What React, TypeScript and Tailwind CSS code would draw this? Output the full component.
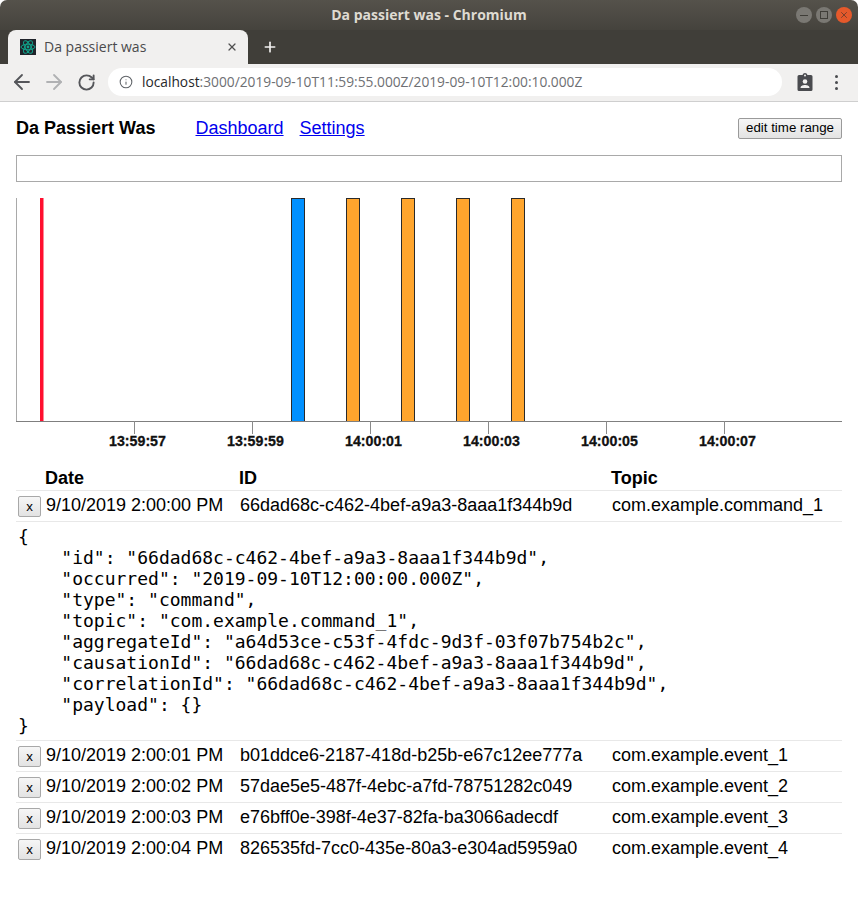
import { ArrowLeft, ArrowRight, Info, Plus, RotateCw, X } from 'lucide-react';

const events = [
  { date: '9/10/2019 2:00:00 PM', id: '66dad68c-c462-4bef-a9a3-8aaa1f344b9d', topic: 'com.example.command_1', open: true },
  { date: '9/10/2019 2:00:01 PM', id: 'b01ddce6-2187-418d-b25b-e67c12ee777a', topic: 'com.example.event_1' },
  { date: '9/10/2019 2:00:02 PM', id: '57dae5e5-487f-4ebc-a7fd-78751282c049', topic: 'com.example.event_2' },
  { date: '9/10/2019 2:00:03 PM', id: 'e76bff0e-398f-4e37-82fa-ba3066adecdf', topic: 'com.example.event_3' },
  { date: '9/10/2019 2:00:04 PM', id: '826535fd-7cc0-435e-80a3-e304ad5959a0', topic: 'com.example.event_4' },
];

const json = `{
    "id": "66dad68c-c462-4bef-a9a3-8aaa1f344b9d",
    "occurred": "2019-09-10T12:00:00.000Z",
    "type": "command",
    "topic": "com.example.command_1",
    "aggregateId": "a64d53ce-c53f-4fdc-9d3f-03f07b754b2c",
    "causationId": "66dad68c-c462-4bef-a9a3-8aaa1f344b9d",
    "correlationId": "66dad68c-c462-4bef-a9a3-8aaa1f344b9d",
    "payload": {}
}`;

const ticks = [
  { x: 118, label: '13:59:57' },
  { x: 236, label: '13:59:59' },
  { x: 354, label: '14:00:01' },
  { x: 472, label: '14:00:03' },
  { x: 590, label: '14:00:05' },
  { x: 708, label: '14:00:07' },
];

function Favicon() {
  return (
    <svg width="16" height="16" viewBox="0 0 16 16" className="shrink-0">
      <rect width="16" height="16" fill="#20232a" />
      <g fill="none" stroke="#10a58c" strokeWidth="1">
        <ellipse cx="8" cy="8" rx="7" ry="2.8" />
        <ellipse cx="8" cy="8" rx="7" ry="2.8" transform="rotate(60 8 8)" />
        <ellipse cx="8" cy="8" rx="7" ry="2.8" transform="rotate(120 8 8)" />
      </g>
      <circle cx="8" cy="8" r="1.4" fill="#10a58c" />
    </svg>
  );
}

function BrowserChrome() {
  return (
    <div className="font-['Noto_Sans',sans-serif]">
      <div className="relative h-[30px] rounded-t-[7px] bg-gradient-to-b from-[#55524b] to-[#45433d]">
        <div className="pt-[5px] text-center text-[14px] leading-[20px] font-bold text-[#dfdbd2] font-['Open_Sans',sans-serif]">
          Da passiert was - Chromium
        </div>
        <div className="absolute top-[7px] right-[6px] flex gap-[4px]">
          <div className="flex h-4 w-4 items-center justify-center rounded-full bg-[#7a7873]">
            <div className="h-px w-2 bg-[#3f3d38]" />
          </div>
          <div className="flex h-4 w-4 items-center justify-center rounded-full bg-[#7a7873]">
            <div className="h-2 w-2 border border-[#3f3d38]" />
          </div>
          <div className="flex h-4 w-4 items-center justify-center rounded-full bg-[#e5592b]">
            <X size={10} strokeWidth={1.5} className="text-[#40302a]" />
          </div>
        </div>
      </div>
      <div className="flex h-[34px] items-end bg-[#403e39] pl-2">
        <div className="flex h-[34px] w-[240px] items-center rounded-t-[8px] bg-[#f1f0ef] pr-[10px] pl-3">
          <Favicon />
          <span className="mb-[2px] ml-2 flex-1 text-[14px] text-[#4a4a4c] font-['Open_Sans',sans-serif]">Da passiert was</span>
          <X size={12} strokeWidth={2.5} className="text-[#505050]" />
        </div>
        <Plus size={16} strokeWidth={2.5} className="mb-[9px] ml-[14px] text-[#f1f0ef]" />
      </div>
      <div className="flex h-[38px] items-center border-b border-[#cfcfcf] bg-[#f1f0ef] pb-px">
        <ArrowLeft size={24} strokeWidth={1.8} className="ml-[10px] text-[#55565a]" />
        <ArrowRight size={24} strokeWidth={1.8} className="ml-[8px] text-[#b0b1b3]" />
        <RotateCw size={19} strokeWidth={2.4} className="ml-[11px] text-[#55565a]" />
        <div className="ml-[12px] flex h-[28px] w-[674px] items-center rounded-full bg-white pl-[11px]">
          <Info size={14} strokeWidth={1.8} className="text-[#5f6368]" />
          <span className="ml-[9px] text-[13.75px] text-[#6e6f73] font-['Open_Sans',sans-serif]">
            <span className="text-[#26272a]">localhost</span>:3000/2019-09-10T11:59:55.000Z/2019-09-10T12:00:10.000Z
          </span>
        </div>
        <svg width="16" height="20" viewBox="0 0 16 20" className="ml-[15px] text-[#4a4b4f]">
          <path fill="currentColor" d="M2 3h3.5a2.6 2.6 0 0 1 5 0H14a1.500 1.500 0 0 1 1.500 1.500v13A1.500 1.500 0 0 1 14 19H2a1.500 1.500 0 0 1-1.500-1.500v-13A1.500 1.500 0 0 1 2 3z" />
          <circle cx="8" cy="9.500" r="2.300" fill="#f1f0ef" />
          <path fill="#f1f0ef" d="M3.500 16c0-2.200 2.500-3 4.500-3s4.500.8 4.500 3z" />
          <circle cx="8" cy="3.400" r="1" fill="#f1f0ef" />
        </svg>
        <div className="ml-[22px] flex flex-col gap-[3px]">
          <div className="h-[3px] w-[3px] rounded-full bg-[#4a4b4f]" />
          <div className="h-[3px] w-[3px] rounded-full bg-[#4a4b4f]" />
          <div className="h-[3px] w-[3px] rounded-full bg-[#4a4b4f]" />
        </div>
      </div>
    </div>
  );
}

function Timeline() {
  const bar = (x: number, fill: string) => (
    <rect key={x} x={x + 0.5} y="0.5" width="13" height="223" fill={fill} stroke="#2a2a2a" strokeWidth="1" />
  );
  return (
    <svg width="826" height="262" className="mt-4 block" style={{ fontFamily: '"Liberation Sans", sans-serif' }}>
      <line x1="0.5" y1="0" x2="0.5" y2="223" stroke="#a9a9a9" />
      <rect x="24" y="0" width="3.500" height="223" fill="#ff0f2f" />
      {bar(275, '#0090ff')}
      {bar(330, '#ffa52d')}
      {bar(385, '#ffa52d')}
      {bar(440, '#ffa52d')}
      {bar(495, '#ffa52d')}
      <line x1="0" y1="223.500" x2="826" y2="223.500" stroke="#7f7f7f" />
      {ticks.map((t) => (
        <g key={t.label}>
          <line x1={t.x + 0.5} y1="223" x2={t.x + 0.5} y2="236" stroke="#8a8a8a" />
          <text x={t.x + 3.5} y="248" textAnchor="middle" fontSize="14.2" fontWeight="700" fill="#111" stroke="#111" strokeWidth="0.3">
            {t.label}
          </text>
        </g>
      ))}
    </svg>
  );
}

export default function App() {
  return (
    <div className="min-h-[916px] bg-white text-black font-['Liberation_Sans',sans-serif]">
      <BrowserChrome />
      <div className="px-4">
        <div className="flex h-[53px] items-center pb-px">
          <span className="w-[179.5px] text-[18px] font-bold">Da Passiert Was</span>
          <a href="#" className="text-[18px] text-[#0000ee] underline">Dashboard</a>
          <a href="#" className="ml-4 text-[18px] text-[#0000ee] underline">Settings</a>
          <button className="ml-auto h-[21px] rounded-[2px] border border-[#9a9a9a] bg-gradient-to-b from-[#f6f6f6] to-[#e3e3e3] px-[7px] text-[13.3px] leading-none">
            edit time range
          </button>
        </div>
        <input className="block h-[27px] w-full border border-[#a9a9a9]" />
        <Timeline />
        <div className="mt-[4px]">
          <div className="grid h-[26px] grid-cols-[29px_194px_372px_1fr] items-center pt-px text-[18px] font-bold">
            <span />
            <span>Date</span>
            <span>ID</span>
            <span>Topic</span>
          </div>
          {events.map((e) => (
            <div key={e.id}>
              <div className="grid h-[31px] grid-cols-[30px_194px_372px_1fr] items-center border-t border-[#e8e8e8] pb-[2px] text-[18px]">
                <button className="mt-[3px] ml-[2px] h-[21px] w-[23px] rounded-[2px] border border-[#a8a8a8] bg-gradient-to-b from-[#f6f6f6] to-[#e3e3e3] text-[13.3px] leading-none">
                  x
                </button>
                <span>{e.date}</span>
                <span>{e.id}</span>
                <span>{e.topic}</span>
              </div>
              {e.open && (
                <pre className="border-t border-[#e8e8e8] pt-[4px] pb-[4px] pl-[2px] text-[18px] leading-[21px] font-['DejaVu_Sans_Mono',monospace]">
                  {json}
                </pre>
              )}
            </div>
          ))}
        </div>
      </div>
    </div>
  );
}
